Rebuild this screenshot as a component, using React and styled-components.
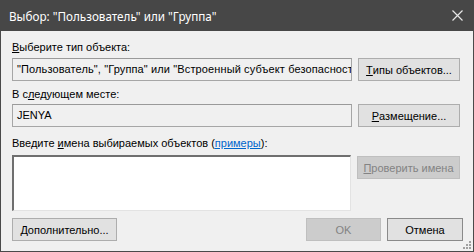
import React from "react";
import styled, { createGlobalStyle } from "styled-components";

const Global = createGlobalStyle`
  html, body { margin: 0; padding: 0; background: #ffffff; }
  * { box-sizing: border-box; }
`;

const Window = styled.div`
  width: 474px;
  height: 252px;
  display: flex;
  flex-direction: column;
  background: #f0f0f0;
  border: 1px solid #4a4a4a;
  border-top: none;
  position: relative;
  font-family: "Liberation Sans", Arial, sans-serif;
  font-size: 11px;
  color: #000;
`;

const TitleBar = styled.div`
  height: 31px;
  margin: 0 -1px;
  background: #474747;
  display: flex;
  align-items: center;
  justify-content: space-between;
  padding: 0 11px 0 9px;
  color: #ffffff;
  font-family: "Noto Sans", "Open Sans", sans-serif;
  font-size: 11.7px;
`;

const CloseIcon = styled.svg`
  width: 11px;
  height: 11px;
`;

const Body = styled.div`
  flex: 1;
  display: flex;
  flex-direction: column;
  padding: 10px 12px 0 11px;
`;

const Label = styled.div`
  height: 13px;
  line-height: 13px;
  margin-top: ${(p) => p.$mt || 0}px;
  white-space: nowrap;
`;

const Row = styled.div`
  display: flex;
  align-items: ${(p) => p.$align || "center"};
  gap: 6px;
  margin-top: ${(p) => p.$mt || 0}px;
`;

const Field = styled.div`
  width: 340px;
  height: 23px;
  border: 1px solid #a6a6a6;
  border-top-color: #9a9a9a;
  background: #f0f0f0;
  padding: 0 0 0 4px;
  line-height: 21px;
  white-space: nowrap;
  overflow: hidden;
  letter-spacing: ${(p) => (p.$wide ? "0.12px" : "0")};
`;

const TextArea = styled.div`
  width: 339px;
  height: 56px;
  background: #ffffff;
  border: 1px solid #a6a6a6;
  border-top: 2px solid #6f6f6f;
  border-left: 2px solid #6f6f6f;
  border-right-color: #e3e3e3;
  border-bottom-color: #e3e3e3;
`;

const Button = styled.div`
  width: ${(p) => p.$w || 102}px;
  height: 23px;
  flex: none;
  display: flex;
  align-items: center;
  justify-content: center;
  background: ${(p) => (p.$disabled ? "#cccccc" : "#e1e1e1")};
  border: 1px solid ${(p) => (p.$disabled ? "#bfbfbf" : p.$default ? "#8a8a8a" : "#adadad")};
  color: ${(p) => (p.$disabled ? "#838383" : "#000")};
  white-space: nowrap;
  margin-top: ${(p) => p.$mt || 0}px;
`;

const U = styled.span`
  text-decoration: underline;
  text-underline-offset: 1px;
`;

const Link = styled.span`
  color: #0066cc;
  text-decoration: underline;
  text-underline-offset: 1px;
`;

const Footer = styled.div`
  display: flex;
  align-items: center;
  margin-top: 7px;
`;

const Spacer = styled.div`
  flex: 1;
`;

const FooterRight = styled.div`
  display: flex;
  gap: 6px;
  margin-right: -2px;
`;

const Grip = styled.svg`
  position: absolute;
  right: 1px;
  bottom: 1px;
  width: 10px;
  height: 10px;
`;

export default function App() {
  return (
    <>
      <Global />
      <Window>
        <TitleBar>
          <span>Выбор: "Пользователь" или "Группа"</span>
          <CloseIcon viewBox="0 0 11 11">
            <path d="M0.5 0.5 L10.5 10.5 M10.5 0.5 L0.5 10.5" stroke="#e6e6e6" strokeWidth="1.2" fill="none" />
          </CloseIcon>
        </TitleBar>
        <Body>
          <Label>
            <U>В</U>ыберите тип объекта:
          </Label>
          <Row $mt={4}>
            <Field $wide>"Пользователь", "Группа" или "Встроенный субъект безопасност</Field>
            <Button>
              <U>Т</U>ипы объектов...
            </Button>
          </Row>
          <Label $mt={7}>
            В с<U>л</U>едующем месте:
          </Label>
          <Row $mt={3}>
            <Field>JENYA</Field>
            <Button>
              <U>Р</U>азмещение...
            </Button>
          </Row>
          <Label $mt={10}>
            Введите <U>и</U>мена выбираемых объектов (<Link>примеры</Link>):
          </Label>
          <Row $mt={5} $align="flex-start">
            <TextArea />
            <Button $disabled $mt={1} $w={103}>
              <U>П</U>роверить имена
            </Button>
          </Row>
          <Footer>
            <Button $w={105}>
              <U>Д</U>ополнительно...
            </Button>
            <Spacer />
            <FooterRight>
              <Button $disabled $w={75}>OK</Button>
              <Button $default $w={76}>Отмена</Button>
            </FooterRight>
          </Footer>
        </Body>
        <Grip viewBox="0 0 10 10">
          <g fill="#a0a0a0">
            <rect x="7" y="1" width="2" height="2" />
            <rect x="4" y="4" width="2" height="2" />
            <rect x="7" y="4" width="2" height="2" />
            <rect x="1" y="7" width="2" height="2" />
            <rect x="4" y="7" width="2" height="2" />
            <rect x="7" y="7" width="2" height="2" />
          </g>
        </Grip>
      </Window>
    </>
  );
}
